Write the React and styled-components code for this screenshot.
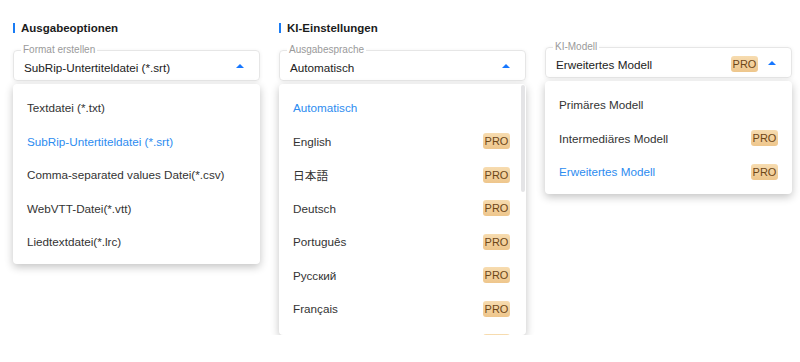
import React from "react";
import styled, { createGlobalStyle } from "styled-components";

const GlobalStyle = createGlobalStyle`
	body {
		margin: 0;
		background: #fff;
		font-family: "Liberation Sans", Arial, "Noto Sans CJK JP", sans-serif;
	}
`;

const Page = styled.div`
	display: flex;
	align-items: flex-start;
	gap: 19px;
	padding: 21px 0 0 13px;
`;

const Column = styled.div`
	width: 247px;
	display: flex;
	flex-direction: column;
	padding-top: ${(p) => p.$offset || 0}px;
`;

const Heading = styled.h2`
	display: flex;
	align-items: center;
	gap: 6px;
	height: 14px;
	margin: 0 0 15px;
	font-size: 11.5px;
	font-weight: 700;
	color: #1b1b1b;

	&::before {
		content: "";
		width: 2px;
		height: 10px;
		background: #1a7cf4;
	}
`;

const SelectBox = styled.div`
	position: relative;
	height: 31px;
	box-sizing: border-box;
	display: flex;
	align-items: center;
	gap: 10px;
	padding: 3px 15px 0 10px;
	border: 1px solid #e6e6e6;
	border-radius: 4px;
	box-shadow: 0 1px 4px rgba(0, 0, 0, 0.07);
	font-size: 11.7px;
	color: #222;
`;

const Label = styled.span`
	position: absolute;
	top: -7px;
	left: 7px;
	padding: 0 2px;
	background: #fff;
	font-size: 10px;
	line-height: 12px;
	color: #9a9a9a;
`;

const Value = styled.span`
	flex: 1;
`;

const Arrow = styled.span`
	width: 0;
	height: 0;
	border-left: 4px solid transparent;
	border-right: 4px solid transparent;
	border-bottom: 4px solid #1677ff;
	margin-bottom: 2px;
`;

const Pro = styled.span`
	display: inline-flex;
	align-items: center;
	justify-content: center;
	width: 27px;
	height: 16px;
	border-radius: 3px;
	background: linear-gradient(180deg, #f7dcb0 0%, #eec68c 100%);
	color: #6e4617;
	font-size: 11px;
`;

const Panel = styled.div`
	position: relative;
	margin-top: 3px;
	background: #fff;
	border-radius: 4px;
	box-shadow: 0 3px 9px rgba(0, 0, 0, 0.24);
	padding: 7px 0 5px;
	max-height: ${(p) => (p.$max ? `${p.$max}px` : "none")};
	box-sizing: border-box;
	overflow: hidden;
`;

const ScrollThumb = styled.div`
	position: absolute;
	top: 1px;
	right: 1px;
	width: 4px;
	height: 107px;
	border-radius: 2px;
	background: #e4e4e6;
`;

const Item = styled.div`
	height: 33.5px;
	display: flex;
	align-items: center;
	justify-content: space-between;
	padding: 0 ${(p) => (p.$scroll ? 16 : 14)}px 0 14px;
	font-size: 11.7px;
	color: ${(p) => (p.$active ? "#2d8cf0" : "#333")};
`;

const formats = [
	"Textdatei (*.txt)",
	"SubRip-Untertiteldatei (*.srt)",
	"Comma-separated values Datei(*.csv)",
	"WebVTT-Datei(*.vtt)",
	"Liedtextdatei(*.lrc)",
];

const languages = [
	"Automatisch",
	"English",
	"日本語",
	"Deutsch",
	"Português",
	"Русский",
	"Français",
	"Español",
];

const models = [
	{ name: "Primäres Modell", pro: false },
	{ name: "Intermediäres Modell", pro: true },
	{ name: "Erweitertes Modell", pro: true },
];

const App = () => {
	return (
		<>
			<GlobalStyle />
			<Page>
				<Column>
					<Heading>Ausgabeoptionen</Heading>
					<SelectBox>
						<Label>Format erstellen</Label>
						<Value>SubRip-Untertiteldatei (*.srt)</Value>
						<Arrow />
					</SelectBox>
					<Panel>
						{formats.map((f) => (
							<Item key={f} $active={f.startsWith("SubRip")}>
								{f}
							</Item>
						))}
					</Panel>
				</Column>

				<Column>
					<Heading>KI-Einstellungen</Heading>
					<SelectBox>
						<Label>Ausgabesprache</Label>
						<Value>Automatisch</Value>
						<Arrow />
					</SelectBox>
					<Panel $max={251}>
						<ScrollThumb />
						{languages.map((l, i) => (
							<Item key={l} $active={i === 0} $scroll>
								{l}
								{i > 0 && <Pro>PRO</Pro>}
							</Item>
						))}
					</Panel>
				</Column>

				<Column $offset={26}>
					<SelectBox>
						<Label>KI-Modell</Label>
						<Value>Erweitertes Modell</Value>
						<Pro>PRO</Pro>
						<Arrow />
					</SelectBox>
					<Panel>
						{models.map((m, i) => (
							<Item key={m.name} $active={i === 2}>
								{m.name}
								{m.pro && <Pro>PRO</Pro>}
							</Item>
						))}
					</Panel>
				</Column>
			</Page>
		</>
	);
};

export default App;
